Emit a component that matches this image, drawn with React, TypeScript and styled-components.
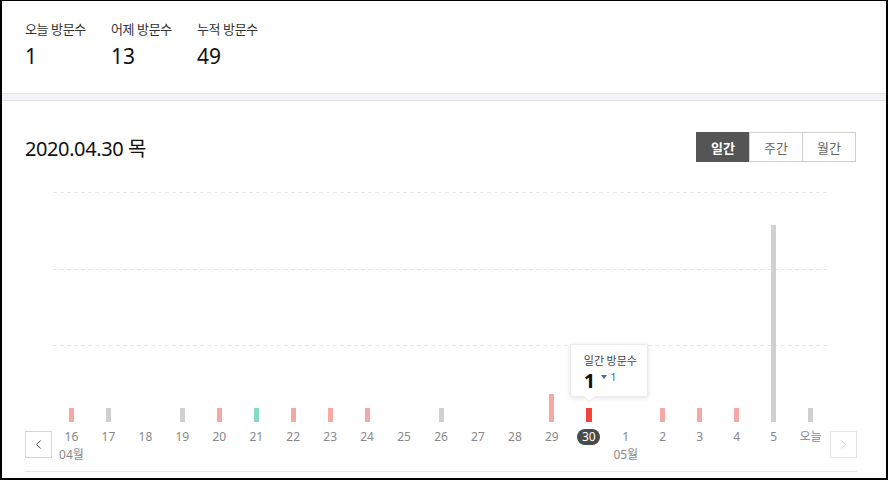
import styled, { createGlobalStyle } from "styled-components";
import { ChevronLeft, ChevronRight } from "lucide-react";

// 전역 스타일
const GlobalStyle = createGlobalStyle`
  html, body {
    margin: 0;
    padding: 0;
    background: #fff;
  }
  body {
    font-family: "Noto Sans", "Noto Sans CJK KR", sans-serif;
    color: #222;
  }
`;

type BarTone = "pink" | "gray" | "teal" | "red";

const toneColor: Record<BarTone, string> = {
  pink: "#f5a8a5",
  gray: "#cfd0d2",
  teal: "#80dcc4",
  red: "#f2443e",
};

interface Day {
  label: string;
  month?: string;
  visits: number;
  tone?: BarTone;
  selected?: boolean;
}

const days: Day[] = [
  { label: "16", month: "04월", visits: 1, tone: "pink" },
  { label: "17", visits: 1, tone: "gray" },
  { label: "18", visits: 0 },
  { label: "19", visits: 1, tone: "gray" },
  { label: "20", visits: 1, tone: "pink" },
  { label: "21", visits: 1, tone: "teal" },
  { label: "22", visits: 1, tone: "pink" },
  { label: "23", visits: 1, tone: "pink" },
  { label: "24", visits: 1, tone: "pink" },
  { label: "25", visits: 0 },
  { label: "26", visits: 1, tone: "gray" },
  { label: "27", visits: 0 },
  { label: "28", visits: 0 },
  { label: "29", visits: 2, tone: "pink" },
  { label: "30", visits: 1, tone: "red", selected: true },
  { label: "1", month: "05월", visits: 0 },
  { label: "2", visits: 1, tone: "pink" },
  { label: "3", visits: 1, tone: "pink" },
  { label: "4", visits: 1, tone: "pink" },
  { label: "5", visits: 14, tone: "gray" },
  { label: "오늘", visits: 1, tone: "gray" },
];

const BAR_UNIT = 14.1;

// 페이지 프레임
const Frame = styled.div`
  width: 888px;
  height: 480px;
  box-sizing: border-box;
  border: 2px solid #000;
  border-top-width: 1px;
  overflow: hidden;
  background: #fff;
`;

// 상단 방문수 요약
const StatsSection = styled.div`
  display: flex;
  gap: 25px;
  height: 92px;
  box-sizing: border-box;
  padding: 19px 23px 0;
`;

const Stat = styled.div`
  display: flex;
  flex-direction: column;
  gap: 5px;
  min-width: 61px;
`;

const StatLabel = styled.span`
  font-size: 13px;
  line-height: 18px;
  letter-spacing: -0.4px;
  color: #333;
`;

const StatValue = styled.span`
  font-size: 21px;
  line-height: 26px;
  color: #111;
`;

const Divider = styled.div`
  height: 6px;
  background: #f3f4f6;
  border-top: 1px solid #e2e3e6;
  border-bottom: 1px solid #e2e3e6;
`;

// 차트 영역
const ChartSection = styled.div`
  padding: 31px 29px 0 23px;
`;

const HeaderRow = styled.div`
  display: flex;
  justify-content: space-between;
  align-items: center;
`;

const DateTitle = styled.h2`
  margin: 0;
  padding-top: 4px;
  font-size: 20px;
  font-weight: 400;
  line-height: 26px;
  color: #111;
  letter-spacing: -0.4px;
`;

const Tabs = styled.div`
  display: flex;
  margin-right: 1px;
`;

const Tab = styled.button<{ $active?: boolean }>`
  width: 54px;
  height: 30px;
  margin-left: -1px;
  box-sizing: border-box;
  border: 1px solid ${(p) => (p.$active ? "#555" : "#cfcfcf")};
  background: ${(p) => (p.$active ? "#555" : "#fff")};
  color: ${(p) => (p.$active ? "#fff" : "#666")};
  font-family: "Noto Sans CJK KR", sans-serif;
  font-size: 13px;
  font-weight: ${(p) => (p.$active ? 700 : 400)};
  padding: 0;
  cursor: pointer;
`;

const ChartBody = styled.div`
  display: grid;
  grid-template-columns: 27px 1fr 27px;
  grid-template-rows: 230px auto;
  column-gap: 1px;
  margin-top: 30px;
  padding-bottom: 8px;
  border-bottom: 1px solid #e6e6e6;
`;

const Plot = styled.div`
  grid-column: 2;
  grid-row: 1;
  display: flex;
  background-image: repeating-linear-gradient(to right, #e6e6e6 0 4px, transparent 4px 7px),
    repeating-linear-gradient(to right, #e6e6e6 0 4px, transparent 4px 7px),
    repeating-linear-gradient(to right, #e6e6e6 0 4px, transparent 4px 7px);
  background-size: 100% 1px;
  background-position: 0 0, 0 77px, 0 153px;
  background-repeat: no-repeat;
`;

const BarColumn = styled.div`
  position: relative;
  flex: 1;
  display: flex;
  align-items: flex-end;
  justify-content: center;
`;

const Bar = styled.div<{ $tone: BarTone; $wide?: boolean }>`
  width: ${(p) => (p.$wide ? 6 : 5)}px;
  background: ${(p) => toneColor[p.$tone]};
`;

// 툴팁
const Tooltip = styled.div`
  position: absolute;
  bottom: 25px;
  left: calc(50% - 19px);
  width: 78px;
  height: 53px;
  box-sizing: border-box;
  padding: 7px 0 0 13px;
  background: #fff;
  border: 1px solid #ececec;
  box-shadow: 0 1px 5px rgba(0, 0, 0, 0.12);
  z-index: 2;

  &::after {
    content: "";
    position: absolute;
    left: 14px;
    bottom: -5px;
    width: 8px;
    height: 8px;
    background: #fff;
    border-right: 1px solid #ececec;
    border-bottom: 1px solid #ececec;
    transform: rotate(45deg);
  }
`;

const TooltipLabel = styled.div`
  font-family: "Noto Sans CJK KR", sans-serif;
  font-size: 11px;
  line-height: 16px;
  color: #444;
`;

const TooltipValue = styled.div`
  display: flex;
  align-items: flex-start;
  gap: 6px;
  margin-top: 3px;
  font-size: 20px;
  font-weight: 700;
  line-height: 20px;
  color: #111;
`;

const Change = styled.span`
  display: flex;
  align-items: center;
  gap: 3px;
  font-size: 11px;
  font-weight: 400;
  line-height: 12px;
  color: #3e63c9;

  &::before {
    content: "";
    border-left: 3px solid transparent;
    border-right: 3px solid transparent;
    border-top: 4px solid #3e63c9;
  }
`;

// X축
const NavButton = styled.button<{ $disabled?: boolean }>`
  grid-row: 2;
  width: 27px;
  height: 27px;
  margin-top: 9px;
  padding: 0;
  box-sizing: border-box;
  display: flex;
  align-items: center;
  justify-content: center;
  background: #fff;
  border: 1px solid ${(p) => (p.$disabled ? "#e6e6e6" : "#d6d6d6")};
  color: ${(p) => (p.$disabled ? "#d0d0d0" : "#333")};
`;

const Axis = styled.div`
  grid-column: 2;
  grid-row: 2;
  display: flex;
  padding-top: 7px;
`;

const Tick = styled.div`
  flex: 1;
  display: flex;
  flex-direction: column;
  align-items: center;
  gap: 2px;
`;

const TickLabel = styled.span<{ $selected?: boolean }>`
  display: inline-flex;
  align-items: center;
  justify-content: center;
  height: 16px;
  min-width: ${(p) => (p.$selected ? "23px" : "0")};
  border-radius: 8px;
  background: ${(p) => (p.$selected ? "#4a4a4a" : "transparent")};
  color: ${(p) => (p.$selected ? "#fff" : "#888")};
  font-size: 12px;
  line-height: 16px;
`;

const MonthLabel = styled.span`
  font-size: 12px;
  line-height: 16px;
  color: #888;
`;

function App() {
  return (
    <>
      <GlobalStyle />
      <Frame>
        <StatsSection>
          <Stat>
            <StatLabel>오늘 방문수</StatLabel>
            <StatValue>1</StatValue>
          </Stat>
          <Stat>
            <StatLabel>어제 방문수</StatLabel>
            <StatValue>13</StatValue>
          </Stat>
          <Stat>
            <StatLabel>누적 방문수</StatLabel>
            <StatValue>49</StatValue>
          </Stat>
        </StatsSection>

        <Divider />

        <ChartSection>
          <HeaderRow>
            <DateTitle>2020.04.30 목</DateTitle>
            <Tabs>
              <Tab $active>일간</Tab>
              <Tab>주간</Tab>
              <Tab>월간</Tab>
            </Tabs>
          </HeaderRow>

          <ChartBody>
            <Plot>
              {days.map((d) => (
                <BarColumn key={d.label}>
                  {d.tone && d.visits > 0 && (
                    <Bar
                      $tone={d.tone}
                      $wide={d.selected}
                      style={{ height: Math.round(d.visits * BAR_UNIT) }}
                    />
                  )}
                  {d.selected && (
                    <Tooltip>
                      <TooltipLabel>일간 방문수</TooltipLabel>
                      <TooltipValue>
                        1<Change>1</Change>
                      </TooltipValue>
                    </Tooltip>
                  )}
                </BarColumn>
              ))}
            </Plot>

            <NavButton style={{ gridColumn: 1 }}>
              <ChevronLeft size={15} strokeWidth={1.5} />
            </NavButton>
            <Axis>
              {days.map((d) => (
                <Tick key={d.label}>
                  <TickLabel $selected={d.selected}>{d.label}</TickLabel>
                  {d.month && <MonthLabel>{d.month}</MonthLabel>}
                </Tick>
              ))}
            </Axis>
            <NavButton $disabled style={{ gridColumn: 3 }}>
              <ChevronRight size={15} strokeWidth={1.5} />
            </NavButton>
          </ChartBody>
        </ChartSection>
      </Frame>
    </>
  );
}

export default App;
